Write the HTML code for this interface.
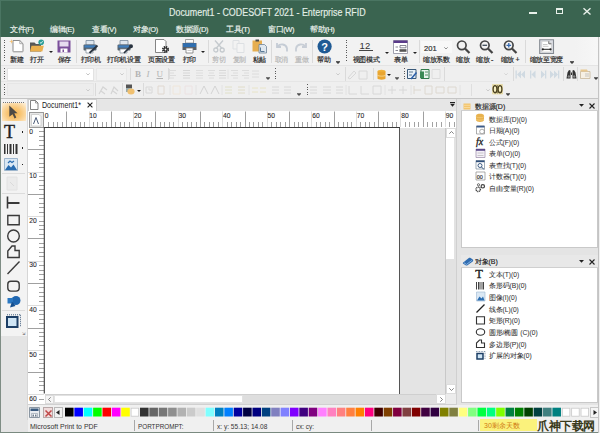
<!DOCTYPE html>
<html><head><meta charset="utf-8">
<style>
*{box-sizing:border-box;margin:0;padding:0}
html,body{width:600px;height:433px;overflow:hidden;background:#f0f0f0;font-family:"Liberation Sans",sans-serif;color:#222}
.a{position:absolute}
svg{position:absolute;overflow:visible}
#green{left:0;top:0;width:600px;height:36.5px;background:#3a6450;border-top:1px solid #4a7562;border-left:1px solid #4a7562}
#title{left:169px;top:6.5px;font-size:10px;color:#e4efe7;white-space:nowrap;transform-origin:0 0;transform:scaleX(0.89);-webkit-text-stroke:0.15px #e4efe7}
.menu{position:absolute;top:25px;font-size:7.5px;color:#eef4ef;white-space:nowrap;-webkit-text-stroke:0.15px #eef4ef;letter-spacing:-0.4px}
.lbl{position:absolute;top:55px;font-size:7px;color:#2a2a2a;white-space:nowrap;line-height:9px;-webkit-text-stroke:0.2px #2a2a2a;letter-spacing:-0.3px}
.dis{color:#b9b9b9;-webkit-text-stroke:0.2px #b9b9b9}
.sep{position:absolute;width:1px;background:#dadada}
.grip{position:absolute;width:1px;background:repeating-linear-gradient(180deg,#5a5a5a 0,#5a5a5a 1px,transparent 1px,transparent 2.5px)}
.dd{position:absolute;width:0;height:0;border-left:2px solid transparent;border-right:2px solid transparent;border-top:2px solid #222}
</style></head><body>
<div id="green" class="a"></div>
<div id="title" class="a">Document1 - CODESOFT 2021 - Enterprise RFID</div>
<!-- window controls -->
<div class="a" style="left:529px;top:11.5px;width:8px;height:2px;background:#e8f0ea"></div>
<div class="a" style="left:555.7px;top:7.5px;width:7.5px;height:6.7px;border:1.2px solid #e8f0ea;border-top-width:2px"></div>
<svg style="left:582.5px;top:8px" width="8" height="7"><path d="M0.5 0.3L7.5 6.5M7.5 0.3L0.5 6.5" stroke="#e8f0ea" stroke-width="1.4"/></svg>

<div class="a menu" style="left:10px">文件(F)</div>
<div class="a menu" style="left:50px">编辑(E)</div>
<div class="a menu" style="left:92px">查看(V)</div>
<div class="a menu" style="left:133px">对象(O)</div>
<div class="a menu" style="left:176px">数据源(D)</div>
<div class="a menu" style="left:226px">工具(T)</div>
<div class="a menu" style="left:268px">窗口(W)</div>
<div class="a menu" style="left:310px">帮助(H)</div>

<!-- toolbar 1 -->
<div class="a" style="left:0;top:36.5px;width:600px;height:29px;background:#f2f2f2"></div>
<div class="a" style="left:575px;top:36.5px;width:25px;height:29px;background:linear-gradient(90deg,#f2f2f2,#f7f7f7)"></div>
<div class="grip" style="left:4px;top:40px;height:22px"></div>

<!-- 新建 -->
<svg style="left:9px;top:39px" width="16" height="14">
 <path d="M4 1.5H10.8L14 4.7V12.3Q14 12.8 13.5 12.8H4.5Q4 12.8 4 12.3Z" fill="#fff" stroke="#8c8c8c" stroke-width="1"/>
 <path d="M10.8 1.5V4.7H14" fill="none" stroke="#9a9a9a" stroke-width="0.8"/>
 <path d="M2.5 0L3.1 1.9L5 2.5L3.1 3.1L2.5 5L1.9 3.1L0 2.5L1.9 1.9Z" fill="#f3c27a"/>
</svg>
<div class="lbl" style="left:10px">新建</div>
<!-- 打开 -->
<svg style="left:29px;top:39px" width="16" height="14">
 <path d="M1 3.5H5.5L7 5H12V12.5H1Z" fill="#575757"/>
 <path d="M1 12.5L2.5 6.8H14.8L13.3 12.5Z" fill="#eab04e"/>
 <circle cx="12.2" cy="3.2" r="2.8" fill="#2a9d96"/>
 <path d="M11 3.4L12.1 4.4L13.6 2.2" stroke="#fff" stroke-width="0.8" fill="none"/>
</svg>
<div class="lbl" style="left:30px">打开</div>
<div class="dd" style="left:48.5px;top:51px"></div>
<!-- 保存 -->
<svg style="left:57px;top:39.5px" width="14" height="13">
 <path d="M0.5 0.5H13.5V12.5H0.5Z" fill="#7a4f9a"/>
 <path d="M2.5 1.5H11.5V6.5H2.5Z" fill="#e6dcef"/>
 <path d="M3.5 8.5H10.5V12.5H3.5Z" fill="#fff"/>
 <path d="M5.5 9.5H7V12H5.5Z" fill="#7a4f9a"/>
</svg>
<div class="lbl" style="left:57.5px">保存</div>
<div class="sep" style="left:76px;top:40px;height:23px"></div>
<!-- 打印机 -->
<svg style="left:82.5px;top:39.5px" width="16" height="14">
 <path d="M3 0.5H11V5H3Z" fill="#dfe7ef" stroke="#76899b" stroke-width="0.8"/>
 <rect x="0.5" y="4.5" width="13" height="6" rx="1" fill="#56636f"/>
 <path d="M1.5 5.3H12.5V7.6H1.5Z" fill="#3f7fbf"/>
 <path d="M3 9H10V13H3Z" fill="#fff" stroke="#7d8a96" stroke-width="0.7"/>
 <path d="M6.5 13L14.5 5.5" stroke="#2a3440" stroke-width="1.8"/>
</svg>
<div class="lbl" style="left:80.5px">打印机</div>
<!-- 打印机设置 -->
<svg style="left:117px;top:39.5px" width="16" height="14">
 <path d="M3 0.5H11V5H3Z" fill="#dfe7ef" stroke="#76899b" stroke-width="0.8"/>
 <rect x="0.5" y="4.5" width="13" height="6" rx="1" fill="#56636f"/>
 <path d="M1.5 5.3H12.5V7.6H1.5Z" fill="#3f7fbf"/>
 <path d="M3 9H10V13H3Z" fill="#fff" stroke="#7d8a96" stroke-width="0.7"/>
 <path d="M7 13L11.5 8.5" stroke="#2a3440" stroke-width="1.7"/>
 <path d="M10.5 9.5L12 6.2A2 2 0 1 1 14 8.3Z" fill="#2a3440"/>
</svg>
<div class="lbl" style="left:107px">打印机设置</div>
<!-- 页面设置 -->
<svg style="left:155px;top:39px" width="16" height="14">
 <path d="M0.5 0.5H9L11 2.5V13.5H0.5Z" fill="#fff" stroke="#777" stroke-width="0.9"/>
 <circle cx="10.5" cy="10.5" r="2.6" fill="none" stroke="#2a2a2a" stroke-width="1.9" stroke-dasharray="1.3 0.75"/>
 <circle cx="10.5" cy="10.5" r="2" fill="#2a2a2a"/>
 <circle cx="10.5" cy="10.5" r="0.9" fill="#fff"/>
</svg>
<div class="lbl" style="left:148px">页面设置</div>
<!-- 打印 -->
<svg style="left:182px;top:39px" width="16" height="15">
 <path d="M3.5 0.5H11.5V4H3.5Z" fill="#fafafa" stroke="#8a8a8a" stroke-width="0.8"/>
 <path d="M0.5 4H14.5V11H0.5Z" fill="#5a5f66"/>
 <path d="M1 4.2H14V8H1Z" fill="#2f6eb0"/>
 <path d="M4 9H11V14H4Z" fill="#fff" stroke="#777" stroke-width="0.8"/>
 <path d="M5.5 11.5H9.5" stroke="#aaa" stroke-width="0.6"/>
</svg>
<div class="lbl" style="left:182.5px">打印</div>
<div class="dd" style="left:200.5px;top:51px"></div>
<div class="sep" style="left:207.5px;top:40px;height:23px"></div>
<!-- 剪切 -->
<svg style="left:213px;top:40px" width="13" height="13">
 <path d="M2 0.5L9 8.5M10 0.5L3 8.5" stroke="#c5cace" stroke-width="1.4"/>
 <circle cx="2.8" cy="10" r="2" fill="none" stroke="#c5cace" stroke-width="1.3"/>
 <circle cx="9.2" cy="10" r="2" fill="none" stroke="#c5cace" stroke-width="1.3"/>
</svg>
<div class="lbl dis" style="left:212px">剪切</div>
<!-- 复制 -->
<svg style="left:232px;top:40px" width="14" height="13">
 <path d="M1 0.5H7V9H1Z" fill="none" stroke="#dde0e3" stroke-width="1"/>
 <path d="M5 3.5H12V12.5H5Z" fill="#f4f4f4" stroke="#dde0e3" stroke-width="1"/>
</svg>
<div class="lbl dis" style="left:232.5px">复制</div>
<!-- 粘贴 -->
<svg style="left:252px;top:39px" width="15" height="15">
 <path d="M0.5 1.5H10V12.5H0.5Z" fill="#e6ae50"/>
 <path d="M3.5 0.5H7V2.5H3.5Z" fill="#4a4a4a"/>
 <path d="M7 5.5H12.5L14.5 7.5V14H7Z" fill="#dfe7ef" stroke="#6d8398" stroke-width="0.8"/>
 <path d="M8.5 8.5V12.5H12.5" fill="none" stroke="#5a7a96" stroke-width="1"/>
</svg>
<div class="lbl" style="left:252.5px">粘贴</div>
<div class="sep" style="left:270.5px;top:40px;height:23px"></div>
<!-- 取消 -->
<svg style="left:274px;top:42px" width="15" height="11">
 <path d="M3 1V5H7" fill="none" stroke="#c5ccd5" stroke-width="1.8"/>
 <path d="M3.5 4.5C6 1.5 12 1.5 13 6.5L13 9.5" fill="none" stroke="#c5ccd5" stroke-width="1.8"/>
</svg>
<div class="lbl dis" style="left:274.5px">取消</div>
<!-- 重做 -->
<svg style="left:294px;top:42px" width="15" height="11">
 <path d="M12 1V5H8" fill="none" stroke="#c8ced6" stroke-width="1.8"/>
 <path d="M11.5 4.5C9 1.5 3 1.5 2 6.5L2 9.5" fill="none" stroke="#c8ced6" stroke-width="1.8"/>
</svg>
<div class="lbl dis" style="left:295px">重做</div>
<div class="sep" style="left:312px;top:40px;height:23px"></div>
<!-- 帮助 -->
<svg style="left:317px;top:38.5px" width="16" height="16">
 <circle cx="7.6" cy="7.5" r="7.1" fill="#1f5a94"/>
 <text x="7.6" y="11.6" font-family="Liberation Sans" font-weight="bold" font-size="11" fill="#fff" text-anchor="middle">?</text>
</svg>
<div class="lbl" style="left:317px">帮助</div>
<svg style="left:336px;top:61px" width="4" height="3"><path d="M0 0.5H4M0.5 1L2 2.6L3.5 1" stroke="#333" stroke-width="0.8" fill="#333"/></svg>
<div class="grip" style="left:346px;top:40px;height:22px"></div>
<!-- 视图模式 -->
<div class="a" style="left:359.5px;top:41px;font-size:9.5px;color:#333;line-height:9px;letter-spacing:0.3px">12</div>
<div class="a" style="left:359px;top:50px;width:14px;height:1px;background:#444"></div>
<div class="lbl" style="left:352.5px">视图模式</div>
<div class="dd" style="left:384.5px;top:52px"></div>
<!-- 表单 -->
<svg style="left:393px;top:39.5px" width="15" height="14">
 <path d="M0.5 0.5H14.5V13.5H0.5Z" fill="#fff" stroke="#8a8a9a" stroke-width="0.8"/>
 <path d="M0.5 0.5H14.5V3H0.5Z" fill="#5a3a8a"/>
 <path d="M2.5 7H5M7 5.5H13V7.8H7Z" stroke="#6a6a7a" stroke-width="0.8" fill="none"/>
 <path d="M2.5 10.5H5" stroke="#6a6a7a" stroke-width="0.8"/>
 <path d="M6.5 9.2H13.5V11.8H6.5Z" fill="#555"/>
</svg>
<div class="lbl" style="left:394px">表单</div>
<div class="dd" style="left:412.5px;top:52px"></div>
<div class="sep" style="left:419px;top:40px;height:23px"></div>
<!-- 201 -->
<div class="a" style="left:420.5px;top:41px;width:31px;height:12px;background:#f8f8f8"></div><div class="a" style="left:424px;top:45px;font-size:7.6px;color:#333;line-height:8px;-webkit-text-stroke:0.2px #333">201</div>
<svg style="left:444.3px;top:46.7px" width="4" height="3"><path d="M0.3 0.3L2 2L3.7 0.3" stroke="#777" stroke-width="0.8" fill="none"/></svg>
<div class="lbl" style="left:423px">缩放系数</div>
<!-- zoom -->
<svg style="left:456px;top:40px" width="15" height="15">
 <circle cx="5.8" cy="5.3" r="4.3" fill="none" stroke="#444" stroke-width="1.7"/>
 <path d="M9 8.5L13.5 13" stroke="#444" stroke-width="2.2"/>
</svg>
<div class="lbl" style="left:456px">缩放</div>
<svg style="left:479px;top:40px" width="15" height="15">
 <circle cx="5.8" cy="5.3" r="4.3" fill="none" stroke="#444" stroke-width="1.7"/>
 <path d="M9 8.5L13.5 13" stroke="#444" stroke-width="2.2"/>
 <path d="M3.5 5.3H8.1" stroke="#3e4a58" stroke-width="1.3"/>
</svg>
<div class="lbl" style="left:476px">缩放 -</div>
<svg style="left:503px;top:40px" width="15" height="15">
 <circle cx="5.8" cy="5.3" r="4.3" fill="none" stroke="#444" stroke-width="1.7"/>
 <path d="M9 8.5L13.5 13" stroke="#444" stroke-width="2.2"/>
 <path d="M3.5 5.3H8.1M5.8 3V7.6" stroke="#3469b0" stroke-width="1.3"/>
</svg>
<div class="lbl" style="left:500.5px">缩放 +</div>
<div class="sep" style="left:524.5px;top:40px;height:23px"></div>
<!-- zoom width -->
<svg style="left:539px;top:38.5px" width="16" height="16">
 <path d="M0.7 0.7H14.5V14.5H0.7Z" fill="#dcdee4" stroke="#858a92" stroke-width="1.1"/>
 <path d="M2.8 2.3H9.8L12.3 4.8V13H2.8Z" fill="#fff" stroke="#b8b8b8" stroke-width="0.5"/>
 <path d="M9.8 2.3V4.8H12.3" fill="none" stroke="#444" stroke-width="0.8"/>
 <path d="M4 5.5H8.5M4 7.3H9.5" stroke="#b0b0b0" stroke-width="0.7"/>
 <path d="M4 10.3H11.3" stroke="#222" stroke-width="1"/>
 <circle cx="3.8" cy="10.3" r="1.1" fill="#222"/><circle cx="11.5" cy="10.3" r="1.1" fill="#222"/>
</svg>
<div class="lbl" style="left:529.5px">缩放至宽度</div>
<svg style="left:570px;top:61px" width="4" height="3"><path d="M0 0.5H4M0.5 1L2 2.6L3.5 1" stroke="#333" stroke-width="0.8" fill="#333"/></svg>

<!-- toolbar 2/3 -->
<div class="a" style="left:0;top:65.5px;width:600px;height:32.5px;background:#efefef"></div>
<div class="a" style="left:0;top:65px;width:600px;height:1px;background:#e4e4e4"></div>
<div class="a" style="left:0;top:81px;width:510px;height:1px;background:#e6e6e6"></div>
<!-- row 2 -->
<div class="grip" style="left:4px;top:68px;height:12px"></div>
<div class="a" style="left:7px;top:67.5px;width:87px;height:13px;background:#fff;border:1px solid #e2e2e2"></div>
<svg style="left:85.5px;top:72.5px" width="4" height="3"><path d="M0.3 0.3L2 2L3.7 0.3" stroke="#aaa" stroke-width="0.7" fill="none"/></svg>
<div class="a" style="left:96px;top:67.5px;width:31px;height:13px;background:#f2f2f2;border:1px solid #e8e8e8"></div>
<svg style="left:120px;top:72.5px" width="4" height="3"><path d="M0.3 0.3L2 2L3.7 0.3" stroke="#bbb" stroke-width="0.7" fill="none"/></svg>
<div class="sep" style="left:130px;top:68px;height:12px"></div>
<div class="a" style="left:135px;top:68.5px;font:bold 9px 'Liberation Serif',serif;color:#b4b4b4">B</div>
<div class="a" style="left:146.5px;top:68.5px;font:italic 9px 'Liberation Serif',serif;color:#b4b4b4">I</div>
<div class="a" style="left:156.5px;top:68.5px;font:9px 'Liberation Serif',serif;color:#b4b4b4;text-decoration:underline">U</div>
<div class="sep" style="left:168px;top:68px;height:12px"></div>
<svg style="left:169px;top:69px" width="95" height="11" fill="none" stroke="#dcdcdc" stroke-width="1">
 <path d="M1 1.5H7M1 4H5M1 6.5H7M1 9H5M0.5 0V10"/>
 <path d="M14 1.5H21M14 4H21M14 6.5H21M14 9H21" stroke="#d6d6d6"/>
 <path d="M27 1.5H34M27 4H34M27 6.5H34M27 9H34" stroke="#dedede"/>
 <path d="M39 1.5H46M40 4H45M39 6.5H46M40 9H45" stroke="#dcdcdc"/>
 <path d="M50 1.5H57M50 4H57M50 6.5H57M50 9H57" stroke="#d8d8d8"/>
 <path d="M59 0.5V10" stroke="#e2e2e2"/>
 <path d="M62 1.5H69M64 4H69M62 6.5H69M64 9H69"/>
 <path d="M73 1.5H80M75 4H80M73 6.5H80M75 9H80"/>
 <path d="M83 2H90M83 5H90M83 8H90"/>
</svg>
<svg style="left:265.5px;top:77px" width="4" height="3"><path d="M0 0.5H4M0.5 1L2 2.6L3.5 1" stroke="#444" stroke-width="0.7" fill="#444"/></svg>
<div class="grip" style="left:275px;top:68px;height:11px"></div>
<svg style="left:336px;top:73px" width="4" height="3"><path d="M0.3 0.3L2 2L3.7 0.3" stroke="#bbb" stroke-width="0.7" fill="none"/></svg>
<div class="sep" style="left:344.5px;top:67px;height:14px"></div>
<svg style="left:347px;top:69px" width="25" height="11" fill="none" stroke="#d8d8d8" stroke-width="1">
 <path d="M1 9L7 2L9 4L3 10Z M12 2H20V10H12Z"/>
</svg>
<div class="sep" style="left:373px;top:68px;height:12px"></div>
<svg style="left:377px;top:68.5px" width="10" height="12">
 <ellipse cx="4.5" cy="2.5" rx="4" ry="1.8" fill="#f0b43c"/>
 <path d="M0.5 2.5V9.5C0.5 11 8.5 11 8.5 9.5V2.5" fill="#e9a530"/>
 <path d="M0.5 6C0.5 7.5 8.5 7.5 8.5 6" stroke="#fff3c8" stroke-width="0.6" fill="none"/>
</svg>
<div class="dd" style="left:387px;top:73.5px"></div>
<svg style="left:395px;top:77px" width="4" height="3"><path d="M0 0.5H4M0.5 1L2 2.6L3.5 1" stroke="#444" stroke-width="0.7" fill="#444"/></svg>
<div class="grip" style="left:403.5px;top:68px;height:11px"></div>
<svg style="left:407px;top:68.5px" width="36" height="11">
 <path d="M0.5 0.5H9V9.5H0.5Z" fill="#e8f0f8" stroke="#3a5a7a" stroke-width="1"/>
 <path d="M2 3H6M2 6H5" stroke="#3a5a7a" stroke-width="0.8"/>
 <path d="M4 10L9.5 3.5" stroke="#2a5da8" stroke-width="1.5"/>
 <path d="M14 0.5H22V9.5H14Z" fill="#e8f4ec" stroke="#2f7a4a" stroke-width="1"/>
 <path d="M13 2.5H17V9H13Z" fill="#3a8a55"/>
 <path d="M18 3H21M18 6H21" stroke="#2f7a4a" stroke-width="0.8"/>
 <path d="M25 0.5H33V9.5H25Z" fill="none" stroke="#dcdcdc" stroke-width="1"/>
</svg>
<div class="sep" style="left:443.5px;top:67px;height:14px"></div>
<svg style="left:503.5px;top:73px" width="4" height="3"><path d="M0.3 0.3L2 2L3.7 0.3" stroke="#ccc" stroke-width="0.7" fill="none"/></svg>
<div class="sep" style="left:512.5px;top:67px;height:14px"></div>
<svg style="left:515px;top:69.5px" width="46" height="9" fill="#d0dae2">
 <path d="M0.5 0.5H1.8V8.5H0.5Z M2 4.5L6 0.5V8.5Z M6 4.5L10 0.5V8.5Z"/>
 <path d="M15 0.5H16.3V8.5H15Z M16.5 4.5L20.5 0.5V8.5Z"/>
 <path d="M26 0.5L30 4.5L26 8.5Z M30 0.5H31.3V8.5H30Z"/>
 <path d="M35 0.5L39 4.5L35 8.5Z M39 0.5L43 4.5L39 8.5Z M43 0.5H44.3V8.5H43Z"/>
</svg>
<div class="sep" style="left:562.5px;top:67px;height:14px"></div>
<svg style="left:565.5px;top:69px" width="11" height="10" fill="#333">
 <path d="M0.5 9.5L1.5 3.5L3 1L4.5 1.5V9.5Z M5 3.5H6V6H5Z M6.5 1.5L8 1L9.5 3.5L10.5 9.5H6.5Z"/>
 <circle cx="2.8" cy="7.5" r="1.2" fill="#888"/><circle cx="8.2" cy="7.5" r="1.2" fill="#888"/>
</svg>
<div class="sep" style="left:577px;top:67px;height:14px"></div>
<svg style="left:580px;top:69px" width="11" height="10">
 <path d="M0.5 2.5H10V9.5H0.5Z" fill="#f6f0e4" stroke="#c8b89a" stroke-width="0.8"/>
 <path d="M0.5 0.5H7L8 2.5H0.5Z" fill="#e8c890"/>
 <path d="M5 5H9M5 7H9" stroke="#aaa" stroke-width="0.6"/>
</svg>
<svg style="left:593.5px;top:77px" width="4" height="3"><path d="M0 0.5H4M0.5 1L2 2.6L3.5 1" stroke="#333" stroke-width="0.7" fill="#333"/></svg>
<!-- row 3 -->
<div class="grip" style="left:4px;top:84px;height:12px"></div>
<div class="a" style="left:7px;top:82.5px;width:87px;height:13.5px;background:#ededed;border:1px solid #e6e6e6"></div>
<svg style="left:85.5px;top:88.5px" width="4" height="3"><path d="M0.3 0.3L2 2L3.7 0.3" stroke="#bbb" stroke-width="0.7" fill="none"/></svg>
<div class="sep" style="left:95px;top:83px;height:13px"></div>
<svg style="left:98px;top:84.5px" width="22" height="10" fill="none" stroke="#d4d4d4" stroke-width="1.2">
 <path d="M1 9L5 2L9 5M3 6L7 9"/><path d="M13 9L16 2L20 6M15 6L19 9"/>
</svg>
<div class="sep" style="left:121.5px;top:83px;height:13px"></div>
<svg style="left:125px;top:84px" width="10" height="11">
 <path d="M1 0.5H7V4H1Z" fill="#555"/>
 <path d="M1 4H7V8H1Z" fill="#9aa"/>
 <ellipse cx="6" cy="7.5" rx="3.6" ry="3" fill="#f0c070"/>
</svg>
<div class="dd" style="left:136.5px;top:89.5px"></div>
<div class="sep" style="left:142.5px;top:83px;height:13px"></div>
<svg style="left:145px;top:84.5px" width="150" height="10" fill="none" stroke="#d8d8d8" stroke-width="1">
 <path d="M1 2H7V8H1Z M3 4H5V6"/><path d="M13 1H19V9H13Z" stroke="#e0d8d0"/>
 <path d="M25 0V10" stroke="#e2e2e2"/>
 <path d="M28 1H35V9H28Z" stroke="#efe6da"/><path d="M40 1H47V9H40Z" stroke="#ece2e2"/>
 <path d="M51 0V10" stroke="#e2e2e2"/>
 <path d="M55 9L59 1L63 9M66 9L70 1L74 9" stroke="#d4d4d4"/>
 <path d="M77 0V10" stroke="#e2e2e2"/>
 <path d="M80 2H87M80 5H87M80 8H87" stroke="#e0e0c8"/><path d="M93 2H100M93 5H100M93 8H100" stroke="#e0dcc8"/>
 <path d="M104 0V10" stroke="#e2e2e2"/>
 <path d="M107 3H113M115 3H121M107 7H113M115 7H121" stroke="#e8e4c8"/>
 <path d="M127 2H134M127 5H134M127 8H134"/>
 <path d="M139 2H146M139 5H146M139 8H146"/>
</svg>
<svg style="left:297px;top:93px" width="4" height="3"><path d="M0 0.5H4M0.5 1L2 2.6L3.5 1" stroke="#444" stroke-width="0.7" fill="#444"/></svg>
<div class="grip" style="left:306.5px;top:84px;height:11px"></div>
<svg style="left:309px;top:84.5px" width="200" height="10" fill="none" stroke="#d8d8d8" stroke-width="1">
 <path d="M1 2H8M1 5H8M1 8H8"/><path d="M14 2H22M14 5H22M14 8H22"/><path d="M27 2H34M27 5H34M27 8H34"/>
 <path d="M37 0V10" stroke="#e2e2e2"/>
 <path d="M40 1V9H48M52 1V9H60" /><path d="M64 1H72V9H64Z"/>
 <path d="M76 0V10" stroke="#e2e2e2"/>
 <path d="M79 5H87M83 1V9M90 5H98M94 1V9"/>
 <path d="M102 0V10" stroke="#e2e2e2"/>
 <path d="M105 1V9M105 5H112M116 1H123V9H116Z M127 2H135V8H127Z M139 2H147V8H139Z" stroke="#ddd8d0"/>
 <path d="M151 0V10" stroke="#e2e2e2"/>
 <path d="M162.5 -1V11" stroke="#dedede"/>
</svg>
<svg style="left:486px;top:89px" width="4" height="3"><path d="M0.3 0.3L2 2L3.7 0.3" stroke="#bbb" stroke-width="0.7" fill="none"/></svg>
<svg style="left:492px;top:84px" width="12" height="11">
 <path d="M0.5 0.5H10.5V10H0.5Z" fill="#f7efc0" stroke="#e0d090" stroke-width="0.6"/>
 <ellipse cx="3" cy="5.2" rx="1.9" ry="3.6" fill="none" stroke="#4a4020" stroke-width="1.3"/>
 <path d="M5.5 1V9.5" stroke="#6a6030" stroke-width="0.7"/>
 <ellipse cx="8" cy="5.2" rx="1.9" ry="3.6" fill="none" stroke="#4a4020" stroke-width="1.3"/>
</svg>
<svg style="left:506px;top:92.5px" width="4" height="3"><path d="M0 0.5H4M0.5 1L2 2.6L3.5 1" stroke="#333" stroke-width="0.7" fill="#333"/></svg>

<!-- doc area -->
<div class="a" style="left:0;top:97.5px;width:600px;height:1px;background:#c4c4c4"></div>
<div class="a" style="left:0;top:98.5px;width:600px;height:335px;background:#e4e4e4"></div>
<!-- left toolbox -->
<div class="a" style="left:0;top:98.5px;width:27px;height:237px;background:#f3f3f3"></div>
<div class="a" style="left:27px;top:98.5px;width:1px;height:321px;background:#d6d6d6"></div>
<div class="a" style="left:0;top:36.5px;width:1px;height:397px;background:#7f8d85"></div>
<div class="a" style="left:3px;top:101.5px;width:21px;height:1px;border-top:1px dotted #777"></div>
<div class="a" style="left:2px;top:103px;width:24px;height:17.5px;background:radial-gradient(ellipse 65% 70% at 50% 58%,#f6b24a 0%,#f8c677 45%,#fbdcaa 80%,#fdebcf 100%)"></div>
<svg style="left:9px;top:105px" width="10" height="14"><path d="M0.3 0.5L8.5 8.2H5.3L7.3 12.6L5.6 13.5L3.6 9.2L0.3 11.8Z" fill="#4e4a44"/></svg>
<div class="a" style="left:4px;top:123px;font:18px 'Liberation Serif',serif;color:#222;line-height:18px;-webkit-text-stroke:0.4px #222">T</div>
<div class="a" style="left:21.5px;top:131px;width:1.5px;height:1.5px;background:#222"></div>
<svg style="left:4px;top:143.5px" width="15" height="10" fill="#333"><path d="M0 0H1.5V10H0Z M3 0H4V10H3Z M5.5 0H7.5V10H5.5Z M9 0H10V10H9Z M11.5 0H13.5V10H11.5Z"/></svg>
<div class="a" style="left:21.5px;top:147px;width:1.5px;height:1.5px;background:#222"></div>
<svg style="left:3.5px;top:157.5px" width="15" height="13">
 <path d="M0.5 0.5H13.5V12.5H0.5Z" fill="#dbe8f4" stroke="#8aa6c2" stroke-width="0.8"/>
 <path d="M1 12L4.5 7L7 9.5L9.5 6.5L13 12Z" fill="#2a6cb0"/>
 <path d="M4 5L6 3L8 4.5L10 3" stroke="#2a6cb0" stroke-width="1.2" fill="none"/>
</svg>
<div class="a" style="left:21.5px;top:163.5px;width:1.5px;height:1.5px;background:#222"></div>
<div class="a" style="left:2px;top:173px;width:23px;height:1px;background:#dcdcdc"></div>
<svg style="left:6px;top:176px" width="12" height="15"><path d="M1 1H11V14H1Z" fill="#ebebeb" stroke="#e2e2e2" stroke-width="1"/><path d="M4 6L8 10" stroke="#dadada"/></svg>
<div class="a" style="left:2px;top:192.5px;width:23px;height:1px;background:#dcdcdc"></div>
<svg style="left:6px;top:196px" width="15" height="135" fill="none" stroke="#3a3a3a" stroke-width="1.4">
 <path d="M1.5 0.5V12.5" stroke-width="1.6"/><path d="M1.5 7H13.5" stroke-width="2"/>
 <path d="M1.8 19.5H13.2V28.7H1.8Z"/>
 <ellipse cx="7.5" cy="40" rx="5.8" ry="6"/>
 <path d="M1.8 61.5V55L6 50H9V54.5H13.2V61.5Z"/>
 <path d="M1.5 78L13.5 65.5"/>
 <rect x="1.8" y="85.3" width="11.4" height="9.8" rx="3"/>
</svg>
<svg style="left:6.5px;top:295px" width="14" height="13">
 <circle cx="9" cy="5.5" r="4.5" fill="#1f66b0"/>
 <path d="M0.5 3H6V8.5H0.5Z" fill="#2a78c2"/>
 <path d="M3 12.5L5 6.5L8.5 11Z" fill="#164f8e"/>
</svg>
<div class="a" style="left:2px;top:310px;width:23px;height:1px;background:#dcdcdc"></div>
<svg style="left:6px;top:313.5px" width="16" height="14">
 <path d="M1 3H11.5V13H1Z" fill="#cfe5f5" stroke="#1d3f66" stroke-width="2"/>
 <path d="M1 0.8H14.5M14.5 0.8V13" stroke="#1d3f66" stroke-width="0.8" stroke-dasharray="1 1"/>
</svg>
<div class="a" style="left:22px;top:330.5px;font-size:4px;color:#555">&#8690;</div>

<!-- tab row -->
<div class="a" style="left:28px;top:98.5px;width:428px;height:12.5px;background:#e6e6e6"></div>
<div class="a" style="left:27.5px;top:98.5px;width:69.5px;height:13.5px;background:#fff;border:1px solid #cfcfcf;border-bottom:none"></div>
<svg style="left:30px;top:100px" width="9" height="10"><path d="M0.5 0.5H5.5L8 3V9.5H0.5Z" fill="#fff" stroke="#666" stroke-width="0.8"/><path d="M5.5 0.5V3H8" fill="none" stroke="#666" stroke-width="0.6"/></svg>
<div class="a" style="left:41.7px;top:100.5px;font-size:8.3px;color:#222;line-height:9px;transform-origin:0 0;transform:scaleX(0.855)">Document1*</div>
<svg style="left:86.5px;top:101.8px" width="6" height="6"><path d="M0.6 0.6L5.4 5.4M5.4 0.6L0.6 5.4" stroke="#222" stroke-width="1.1"/></svg>
<svg style="left:449.7px;top:102.3px" width="5" height="5" fill="#222"><path d="M0 0H5V1H0Z M0 1.8H5L2.5 4.8Z"/></svg>

<!-- rulers -->
<div class="a" style="left:28px;top:111px;width:428px;height:17px;background:#fff"></div>
<div class="a" style="left:28px;top:128px;width:16.5px;height:276px;background:#fff"></div>
<div class="a" style="left:29px;top:112px;width:15px;height:15.5px;background:#e8e8e8;border:1px solid #9a9a9a"></div>
<svg style="left:31px;top:113.5px" width="11" height="13"><path d="M0.5 0.5H8L10 2.5V12H0.5Z" fill="#fff" stroke="#bbb" stroke-width="0.6"/><path d="M2.5 10L5 3.5L7.5 10" fill="none" stroke="#4a5a78" stroke-width="1"/></svg>
<svg style="left:0;top:0;width:600px;height:433px" width="600" height="433" font-family="Liberation Sans">
<path d="M48.50 122V127" stroke="#a2a2a2" stroke-width="1"/>
<path d="M53.50 122V127" stroke="#a2a2a2" stroke-width="1"/>
<path d="M57.50 122V127" stroke="#a2a2a2" stroke-width="1"/>
<path d="M62.50 122V127" stroke="#a2a2a2" stroke-width="1"/>
<path d="M66.50 111.5V127" stroke="#a0a0a0" stroke-width="1"/>
<path d="M71.50 122V127" stroke="#a2a2a2" stroke-width="1"/>
<path d="M75.50 122V127" stroke="#a2a2a2" stroke-width="1"/>
<path d="M80.50 122V127" stroke="#a2a2a2" stroke-width="1"/>
<path d="M84.50 122V127" stroke="#a2a2a2" stroke-width="1"/>
<path d="M89.50 111.5V127" stroke="#d4d4d4" stroke-width="0.8"/>
<path d="M93.50 122V127" stroke="#a2a2a2" stroke-width="1"/>
<path d="M97.50 122V127" stroke="#a2a2a2" stroke-width="1"/>
<path d="M102.50 122V127" stroke="#a2a2a2" stroke-width="1"/>
<path d="M106.50 122V127" stroke="#a2a2a2" stroke-width="1"/>
<path d="M111.50 111.5V127" stroke="#a0a0a0" stroke-width="1"/>
<path d="M115.50 122V127" stroke="#a2a2a2" stroke-width="1"/>
<path d="M120.50 122V127" stroke="#a2a2a2" stroke-width="1"/>
<path d="M124.50 122V127" stroke="#a2a2a2" stroke-width="1"/>
<path d="M129.50 122V127" stroke="#a2a2a2" stroke-width="1"/>
<path d="M133.50 111.5V127" stroke="#d4d4d4" stroke-width="0.8"/>
<path d="M138.50 122V127" stroke="#a2a2a2" stroke-width="1"/>
<path d="M142.50 122V127" stroke="#a2a2a2" stroke-width="1"/>
<path d="M146.50 122V127" stroke="#a2a2a2" stroke-width="1"/>
<path d="M151.50 122V127" stroke="#a2a2a2" stroke-width="1"/>
<path d="M155.50 111.5V127" stroke="#a0a0a0" stroke-width="1"/>
<path d="M160.50 122V127" stroke="#a2a2a2" stroke-width="1"/>
<path d="M164.50 122V127" stroke="#a2a2a2" stroke-width="1"/>
<path d="M169.50 122V127" stroke="#a2a2a2" stroke-width="1"/>
<path d="M173.50 122V127" stroke="#a2a2a2" stroke-width="1"/>
<path d="M178.50 111.5V127" stroke="#d4d4d4" stroke-width="0.8"/>
<path d="M182.50 122V127" stroke="#a2a2a2" stroke-width="1"/>
<path d="M187.50 122V127" stroke="#a2a2a2" stroke-width="1"/>
<path d="M191.50 122V127" stroke="#a2a2a2" stroke-width="1"/>
<path d="M196.50 122V127" stroke="#a2a2a2" stroke-width="1"/>
<path d="M200.50 111.5V127" stroke="#a0a0a0" stroke-width="1"/>
<path d="M204.50 122V127" stroke="#a2a2a2" stroke-width="1"/>
<path d="M209.50 122V127" stroke="#a2a2a2" stroke-width="1"/>
<path d="M213.50 122V127" stroke="#a2a2a2" stroke-width="1"/>
<path d="M218.50 122V127" stroke="#a2a2a2" stroke-width="1"/>
<path d="M222.50 111.5V127" stroke="#d4d4d4" stroke-width="0.8"/>
<path d="M227.50 122V127" stroke="#a2a2a2" stroke-width="1"/>
<path d="M231.50 122V127" stroke="#a2a2a2" stroke-width="1"/>
<path d="M236.50 122V127" stroke="#a2a2a2" stroke-width="1"/>
<path d="M240.50 122V127" stroke="#a2a2a2" stroke-width="1"/>
<path d="M245.50 111.5V127" stroke="#a0a0a0" stroke-width="1"/>
<path d="M249.50 122V127" stroke="#a2a2a2" stroke-width="1"/>
<path d="M253.50 122V127" stroke="#a2a2a2" stroke-width="1"/>
<path d="M258.50 122V127" stroke="#a2a2a2" stroke-width="1"/>
<path d="M262.50 122V127" stroke="#a2a2a2" stroke-width="1"/>
<path d="M267.50 111.5V127" stroke="#d4d4d4" stroke-width="0.8"/>
<path d="M271.50 122V127" stroke="#a2a2a2" stroke-width="1"/>
<path d="M276.50 122V127" stroke="#a2a2a2" stroke-width="1"/>
<path d="M280.50 122V127" stroke="#a2a2a2" stroke-width="1"/>
<path d="M285.50 122V127" stroke="#a2a2a2" stroke-width="1"/>
<path d="M289.50 111.5V127" stroke="#a0a0a0" stroke-width="1"/>
<path d="M294.50 122V127" stroke="#a2a2a2" stroke-width="1"/>
<path d="M298.50 122V127" stroke="#a2a2a2" stroke-width="1"/>
<path d="M302.50 122V127" stroke="#a2a2a2" stroke-width="1"/>
<path d="M307.50 122V127" stroke="#a2a2a2" stroke-width="1"/>
<path d="M311.50 111.5V127" stroke="#d4d4d4" stroke-width="0.8"/>
<path d="M316.50 122V127" stroke="#a2a2a2" stroke-width="1"/>
<path d="M320.50 122V127" stroke="#a2a2a2" stroke-width="1"/>
<path d="M325.50 122V127" stroke="#a2a2a2" stroke-width="1"/>
<path d="M329.50 122V127" stroke="#a2a2a2" stroke-width="1"/>
<path d="M334.50 111.5V127" stroke="#a0a0a0" stroke-width="1"/>
<path d="M338.50 122V127" stroke="#a2a2a2" stroke-width="1"/>
<path d="M343.50 122V127" stroke="#a2a2a2" stroke-width="1"/>
<path d="M347.50 122V127" stroke="#a2a2a2" stroke-width="1"/>
<path d="M351.50 122V127" stroke="#a2a2a2" stroke-width="1"/>
<path d="M356.50 111.5V127" stroke="#d4d4d4" stroke-width="0.8"/>
<path d="M360.50 122V127" stroke="#a2a2a2" stroke-width="1"/>
<path d="M365.50 122V127" stroke="#a2a2a2" stroke-width="1"/>
<path d="M369.50 122V127" stroke="#a2a2a2" stroke-width="1"/>
<path d="M374.50 122V127" stroke="#a2a2a2" stroke-width="1"/>
<path d="M378.50 111.5V127" stroke="#a0a0a0" stroke-width="1"/>
<path d="M383.50 122V127" stroke="#a2a2a2" stroke-width="1"/>
<path d="M387.50 122V127" stroke="#a2a2a2" stroke-width="1"/>
<path d="M392.50 122V127" stroke="#a2a2a2" stroke-width="1"/>
<path d="M396.50 122V127" stroke="#a2a2a2" stroke-width="1"/>
<path d="M400.50 111.5V127" stroke="#d4d4d4" stroke-width="0.8"/>
<path d="M405.50 122V127" stroke="#a2a2a2" stroke-width="1"/>
<path d="M409.50 122V127" stroke="#a2a2a2" stroke-width="1"/>
<path d="M414.50 122V127" stroke="#a2a2a2" stroke-width="1"/>
<path d="M418.50 122V127" stroke="#a2a2a2" stroke-width="1"/>
<path d="M423.50 111.5V127" stroke="#a0a0a0" stroke-width="1"/>
<path d="M427.50 122V127" stroke="#a2a2a2" stroke-width="1"/>
<path d="M432.50 122V127" stroke="#a2a2a2" stroke-width="1"/>
<path d="M436.50 122V127" stroke="#a2a2a2" stroke-width="1"/>
<path d="M441.50 122V127" stroke="#a2a2a2" stroke-width="1"/>
<path d="M445.50 111.5V127" stroke="#d4d4d4" stroke-width="0.8"/>
<path d="M449.50 122V127" stroke="#a2a2a2" stroke-width="1"/>
<path d="M454.50 122V127" stroke="#a2a2a2" stroke-width="1"/>
<text x="44.80" y="118.4" font-size="6.7" fill="#2a2a2a" stroke="#2a2a2a" stroke-width="0.1">0</text>
<text x="89.36" y="118.4" font-size="6.7" fill="#2a2a2a" stroke="#2a2a2a" stroke-width="0.1">10</text>
<text x="133.92" y="118.4" font-size="6.7" fill="#2a2a2a" stroke="#2a2a2a" stroke-width="0.1">20</text>
<text x="178.48" y="118.4" font-size="6.7" fill="#2a2a2a" stroke="#2a2a2a" stroke-width="0.1">30</text>
<text x="223.04" y="118.4" font-size="6.7" fill="#2a2a2a" stroke="#2a2a2a" stroke-width="0.1">40</text>
<text x="267.60" y="118.4" font-size="6.7" fill="#2a2a2a" stroke="#2a2a2a" stroke-width="0.1">50</text>
<text x="312.16" y="118.4" font-size="6.7" fill="#2a2a2a" stroke="#2a2a2a" stroke-width="0.1">60</text>
<text x="356.72" y="118.4" font-size="6.7" fill="#2a2a2a" stroke="#2a2a2a" stroke-width="0.1">70</text>
<text x="401.28" y="118.4" font-size="6.7" fill="#2a2a2a" stroke="#2a2a2a" stroke-width="0.1">80</text>
<text x="445.84" y="118.4" font-size="6.7" fill="#2a2a2a" stroke="#2a2a2a" stroke-width="0.1">90</text>
<path d="M39 131.50H44" stroke="#a2a2a2" stroke-width="1"/>
<path d="M39 136.50H44" stroke="#a2a2a2" stroke-width="1"/>
<path d="M39 140.50H44" stroke="#a2a2a2" stroke-width="1"/>
<path d="M39 145.50H44" stroke="#a2a2a2" stroke-width="1"/>
<path d="M28 149.50H44" stroke="#a0a0a0" stroke-width="1"/>
<path d="M39 154.50H44" stroke="#a2a2a2" stroke-width="1"/>
<path d="M39 158.50H44" stroke="#a2a2a2" stroke-width="1"/>
<path d="M39 163.50H44" stroke="#a2a2a2" stroke-width="1"/>
<path d="M39 167.50H44" stroke="#a2a2a2" stroke-width="1"/>
<path d="M28 172.50H44" stroke="#d4d4d4" stroke-width="0.8"/>
<path d="M39 176.50H44" stroke="#a2a2a2" stroke-width="1"/>
<path d="M39 180.50H44" stroke="#a2a2a2" stroke-width="1"/>
<path d="M39 185.50H44" stroke="#a2a2a2" stroke-width="1"/>
<path d="M39 189.50H44" stroke="#a2a2a2" stroke-width="1"/>
<path d="M28 194.50H44" stroke="#a0a0a0" stroke-width="1"/>
<path d="M39 198.50H44" stroke="#a2a2a2" stroke-width="1"/>
<path d="M39 203.50H44" stroke="#a2a2a2" stroke-width="1"/>
<path d="M39 207.50H44" stroke="#a2a2a2" stroke-width="1"/>
<path d="M39 212.50H44" stroke="#a2a2a2" stroke-width="1"/>
<path d="M28 216.50H44" stroke="#d4d4d4" stroke-width="0.8"/>
<path d="M39 221.50H44" stroke="#a2a2a2" stroke-width="1"/>
<path d="M39 225.50H44" stroke="#a2a2a2" stroke-width="1"/>
<path d="M39 229.50H44" stroke="#a2a2a2" stroke-width="1"/>
<path d="M39 234.50H44" stroke="#a2a2a2" stroke-width="1"/>
<path d="M28 238.50H44" stroke="#a0a0a0" stroke-width="1"/>
<path d="M39 243.50H44" stroke="#a2a2a2" stroke-width="1"/>
<path d="M39 247.50H44" stroke="#a2a2a2" stroke-width="1"/>
<path d="M39 252.50H44" stroke="#a2a2a2" stroke-width="1"/>
<path d="M39 256.50H44" stroke="#a2a2a2" stroke-width="1"/>
<path d="M28 261.50H44" stroke="#d4d4d4" stroke-width="0.8"/>
<path d="M39 265.50H44" stroke="#a2a2a2" stroke-width="1"/>
<path d="M39 270.50H44" stroke="#a2a2a2" stroke-width="1"/>
<path d="M39 274.50H44" stroke="#a2a2a2" stroke-width="1"/>
<path d="M39 279.50H44" stroke="#a2a2a2" stroke-width="1"/>
<path d="M28 283.50H44" stroke="#a0a0a0" stroke-width="1"/>
<path d="M39 287.50H44" stroke="#a2a2a2" stroke-width="1"/>
<path d="M39 292.50H44" stroke="#a2a2a2" stroke-width="1"/>
<path d="M39 296.50H44" stroke="#a2a2a2" stroke-width="1"/>
<path d="M39 301.50H44" stroke="#a2a2a2" stroke-width="1"/>
<path d="M28 305.50H44" stroke="#d4d4d4" stroke-width="0.8"/>
<path d="M39 310.50H44" stroke="#a2a2a2" stroke-width="1"/>
<path d="M39 314.50H44" stroke="#a2a2a2" stroke-width="1"/>
<path d="M39 319.50H44" stroke="#a2a2a2" stroke-width="1"/>
<path d="M39 323.50H44" stroke="#a2a2a2" stroke-width="1"/>
<path d="M28 328.50H44" stroke="#a0a0a0" stroke-width="1"/>
<path d="M39 332.50H44" stroke="#a2a2a2" stroke-width="1"/>
<path d="M39 336.50H44" stroke="#a2a2a2" stroke-width="1"/>
<path d="M39 341.50H44" stroke="#a2a2a2" stroke-width="1"/>
<path d="M39 345.50H44" stroke="#a2a2a2" stroke-width="1"/>
<path d="M28 350.50H44" stroke="#d4d4d4" stroke-width="0.8"/>
<path d="M39 354.50H44" stroke="#a2a2a2" stroke-width="1"/>
<path d="M39 359.50H44" stroke="#a2a2a2" stroke-width="1"/>
<path d="M39 363.50H44" stroke="#a2a2a2" stroke-width="1"/>
<path d="M39 368.50H44" stroke="#a2a2a2" stroke-width="1"/>
<path d="M28 372.50H44" stroke="#a0a0a0" stroke-width="1"/>
<path d="M39 377.50H44" stroke="#a2a2a2" stroke-width="1"/>
<path d="M39 381.50H44" stroke="#a2a2a2" stroke-width="1"/>
<path d="M39 385.50H44" stroke="#a2a2a2" stroke-width="1"/>
<path d="M39 390.50H44" stroke="#a2a2a2" stroke-width="1"/>
<path d="M28 394.50H44" stroke="#d4d4d4" stroke-width="0.8"/>
<path d="M39 399.50H44" stroke="#a2a2a2" stroke-width="1"/>
<text x="29.3" y="133.80" font-size="6.7" fill="#2a2a2a" stroke="#2a2a2a" stroke-width="0.1">0</text>
<text x="29.3" y="178.36" font-size="6.7" fill="#2a2a2a" stroke="#2a2a2a" stroke-width="0.1">10</text>
<text x="29.3" y="222.92" font-size="6.7" fill="#2a2a2a" stroke="#2a2a2a" stroke-width="0.1">20</text>
<text x="29.3" y="267.48" font-size="6.7" fill="#2a2a2a" stroke="#2a2a2a" stroke-width="0.1">30</text>
<text x="29.3" y="312.04" font-size="6.7" fill="#2a2a2a" stroke="#2a2a2a" stroke-width="0.1">40</text>
<text x="29.3" y="356.60" font-size="6.7" fill="#2a2a2a" stroke="#2a2a2a" stroke-width="0.1">50</text>
<text x="29.3" y="401.16" font-size="6.7" fill="#2a2a2a" stroke="#2a2a2a" stroke-width="0.1">60</text>
<path d="M44 127.6H400" stroke="#3a3a3a" stroke-width="1.1"/>
<path d="M44.3 127V393.5" stroke="#3a3a3a" stroke-width="1.1"/>
</svg>

<!-- canvas -->
<div class="a" style="left:44.5px;top:128px;width:355px;height:265.5px;background:#fff"></div>
<div class="a" style="left:399px;top:128px;width:1px;height:265.5px;background:#555"></div>
<div class="a" style="left:400px;top:128px;width:45px;height:265.5px;background:#e4e4e4"></div>
<!-- v scroll -->
<div class="a" style="left:445px;top:128px;width:11px;height:265.5px;background:#e2e2e2;border-left:1px solid #c8c8c8"></div>
<div class="a" style="left:446px;top:128px;width:8px;height:131px;background:#fff"></div>
<div class="a" style="left:446px;top:128px;width:9.5px;height:9.5px;background:#fff;border:1px solid #dcdcdc"></div>
<svg style="left:448.5px;top:131px" width="5" height="3"><path d="M0.3 2.7L2.5 0.5L4.7 2.7" stroke="#666" stroke-width="0.8" fill="none"/></svg>
<div class="a" style="left:446px;top:384px;width:9.5px;height:9.5px;background:#fff;border:1px solid #dcdcdc"></div>
<svg style="left:448.5px;top:387.5px" width="5" height="3"><path d="M0.3 0.3L2.5 2.5L4.7 0.3" stroke="#666" stroke-width="0.8" fill="none"/></svg>
<!-- h scroll -->
<div class="a" style="left:44.5px;top:393.5px;width:411px;height:1px;background:#cfcfcf"></div>
<div class="a" style="left:44.5px;top:394.5px;width:401.5px;height:10px;background:#dedede"></div>
<div class="a" style="left:45px;top:394.5px;width:8.5px;height:9.5px;background:#f5f5f5;border:1px solid #dcdcdc"></div>
<svg style="left:47.5px;top:397px" width="3" height="5"><path d="M2.7 0.3L0.5 2.5L2.7 4.7" stroke="#666" stroke-width="0.8" fill="none"/></svg>
<div class="a" style="left:53.5px;top:394.5px;width:189.5px;height:8.5px;background:#fff;border:1px solid #e2e2e2"></div>
<div class="a" style="left:436px;top:394px;width:9.5px;height:9.5px;background:#fff;border:1px solid #dcdcdc"></div>
<svg style="left:439.5px;top:396.5px" width="3" height="5"><path d="M0.3 0.3L2.5 2.5L0.3 4.7" stroke="#666" stroke-width="0.8" fill="none"/></svg>
<div class="a" style="left:446px;top:393.5px;width:9.5px;height:10.5px;background:#ececec"></div>
<div class="a" style="left:455.5px;top:98.5px;width:1px;height:306px;background:#d0d0d0"></div>
<div class="a" style="left:28px;top:404px;width:428px;height:1px;background:#d0d0d0"></div>

<!-- right panels -->
<div class="a" style="left:460.5px;top:98.5px;width:137.5px;height:149.5px;background:#fff;border:1px solid #c9c9c9;border-top:none"></div>
<div class="a" style="left:460.5px;top:98.5px;width:137.5px;height:12.5px;background:#e8e8e8;border-bottom:1px solid #cfcfcf"></div>
<svg style="left:463px;top:103px" width="8" height="7"><path d="M0.5 0.5H7.5V6.5H0.5Z" fill="#f3c56e"/><path d="M1 2.3H7M1 4.5H7" stroke="#fbe3b0" stroke-width="0.7"/></svg>
<div class="a" style="left:474.5px;top:102px;font-size:7px;color:#222;line-height:9px;-webkit-text-stroke:0.15px #222">数据源(D)</div>
<svg style="left:579px;top:104px" width="5" height="3"><path d="M0 0H5L2.5 2.8Z" fill="#222"/></svg>
<svg style="left:589px;top:103px" width="6" height="6"><path d="M0.5 0.5L5.5 5.5M5.5 0.5L0.5 5.5" stroke="#222" stroke-width="1.1"/></svg>

<div class="a" style="left:460.5px;top:254.5px;width:137.5px;height:148px;background:#fff;border:1px solid #c9c9c9;border-top:none"></div>
<div class="a" style="left:460.5px;top:254.5px;width:137.5px;height:13px;background:#e8e8e8;border-bottom:1px solid #cfcfcf"></div>
<svg style="left:461.5px;top:256.5px" width="12" height="9"><path d="M1.2 5.5L6.5 1.2C7.2 0.6 8 0.6 8.6 1L10.8 2.6C11.4 3.1 11.3 3.9 10.7 4.4L5.5 8.3C5 8.7 4.2 8.7 3.6 8.3L1.3 6.8C0.8 6.5 0.7 5.9 1.2 5.5Z" fill="#2f6cb0"/><path d="M2 5.8L4.5 7.4L10.2 3.2" stroke="#9cc4ec" stroke-width="0.8" fill="none"/></svg>
<div class="a" style="left:474.5px;top:257px;font-size:7px;color:#222;line-height:9px;-webkit-text-stroke:0.15px #222">对象(B)</div>
<svg style="left:579px;top:260px" width="5" height="3"><path d="M0 0H5L2.5 2.8Z" fill="#222"/></svg>
<svg style="left:589px;top:259px" width="6" height="6"><path d="M0.5 0.5L5.5 5.5M5.5 0.5L0.5 5.5" stroke="#222" stroke-width="1.1"/></svg>
<!-- palette -->
<div class="a" style="left:28px;top:405px;width:572px;height:14px;background:#f0f0f0"></div>
<svg style="left:29px;top:407px" width="11.5" height="11">
 <path d="M0.5 0.5H10.5V10.5H0.5Z" fill="#e8ecf0" stroke="#8a96a2" stroke-width="1"/>
 <path d="M1.5 1.5H9.5V4H1.5Z" fill="#3a5a7e"/>
 <path d="M2.5 6.5H8.5V10H2.5Z" fill="#fff" stroke="#8a96a2" stroke-width="0.6"/>
 <path d="M3.5 7.5H5V9.5H3.5Z M6 7.5H7.5V9.5H6Z" fill="#6a7a8a"/>
</svg>
<div class="a" style="left:42.5px;top:407px;width:10.5px;height:11px;background:#f0dcdc;border:1px solid #b8a8a8"></div>
<svg style="left:44.5px;top:409.5px" width="7" height="7"><path d="M0.5 0.5L6.5 6.5M6.5 0.5L0.5 6.5" stroke="#c04848" stroke-width="1.5"/></svg>
<div class="a" style="left:53.5px;top:407px;width:9px;height:11px;background:#f2f2f2;border:1px solid #b8b8b8"></div>
<svg style="left:56px;top:410px" width="4" height="5"><path d="M3.5 0L0 2.5L3.5 5Z" fill="#222"/></svg>
<svg style="left:0;top:0" width="600" height="433"><rect x="65.00" y="407.7" width="8.57" height="8.8" fill="#000000"/><rect x="74.37" y="407.7" width="8.57" height="8.8" fill="#0000ff"/><rect x="83.75" y="407.7" width="8.57" height="8.8" fill="#00ffff"/><rect x="93.12" y="407.7" width="8.57" height="8.8" fill="#00ff00"/><rect x="102.49" y="407.7" width="8.57" height="8.8" fill="#ff0000"/><rect x="111.87" y="407.7" width="8.57" height="8.8" fill="#ff00ff"/><rect x="121.24" y="407.7" width="8.57" height="8.8" fill="#ffff00"/><rect x="131.11" y="408.2" width="7.57" height="8" fill="#fff" stroke="#c8c8c8" stroke-width="0.8"/><rect x="139.99" y="407.7" width="8.57" height="8.8" fill="#333333"/><rect x="149.36" y="407.7" width="8.57" height="8.8" fill="#666666"/><rect x="158.73" y="407.7" width="8.57" height="8.8" fill="#777777"/><rect x="168.11" y="407.7" width="8.57" height="8.8" fill="#8f8f8f"/><rect x="177.48" y="407.7" width="8.57" height="8.8" fill="#b2b2b2"/><rect x="186.85" y="407.7" width="8.57" height="8.8" fill="#cbcbcb"/><rect x="196.22" y="407.7" width="8.57" height="8.8" fill="#e0e0e0"/><rect x="205.60" y="407.7" width="8.57" height="8.8" fill="#80ffff"/><rect x="214.97" y="407.7" width="8.57" height="8.8" fill="#0080c0"/><rect x="224.34" y="407.7" width="8.57" height="8.8" fill="#0080ff"/><rect x="233.72" y="407.7" width="8.57" height="8.8" fill="#0000a0"/><rect x="243.09" y="407.7" width="8.57" height="8.8" fill="#000040"/><rect x="252.46" y="407.7" width="8.57" height="8.8" fill="#000080"/><rect x="261.84" y="407.7" width="8.57" height="8.8" fill="#004080"/><rect x="271.21" y="407.7" width="8.57" height="8.8" fill="#8080c0"/><rect x="280.58" y="407.7" width="8.57" height="8.8" fill="#8080ff"/><rect x="289.96" y="407.7" width="8.57" height="8.8" fill="#8000ff"/><rect x="299.33" y="407.7" width="8.57" height="8.8" fill="#400080"/><rect x="308.70" y="407.7" width="8.57" height="8.8" fill="#800080"/><rect x="318.08" y="407.7" width="8.57" height="8.8" fill="#ff80ff"/><rect x="327.45" y="407.7" width="8.57" height="8.8" fill="#ff80c0"/><rect x="336.82" y="407.7" width="8.57" height="8.8" fill="#ff8080"/><rect x="346.20" y="407.7" width="8.57" height="8.8" fill="#ff8040"/><rect x="355.57" y="407.7" width="8.57" height="8.8" fill="#ff8000"/><rect x="364.94" y="407.7" width="8.57" height="8.8" fill="#ff0080"/><rect x="374.32" y="407.7" width="8.57" height="8.8" fill="#400000"/><rect x="383.69" y="407.7" width="8.57" height="8.8" fill="#804000"/><rect x="393.06" y="407.7" width="8.57" height="8.8" fill="#800040"/><rect x="402.44" y="407.7" width="8.57" height="8.8" fill="#804040"/><rect x="411.81" y="407.7" width="8.57" height="8.8" fill="#800000"/><rect x="421.18" y="407.7" width="8.57" height="8.8" fill="#400040"/><rect x="430.56" y="407.7" width="8.57" height="8.8" fill="#300040"/><rect x="439.93" y="407.7" width="8.57" height="8.8" fill="#808000"/><rect x="449.30" y="407.7" width="8.57" height="8.8" fill="#808040"/><rect x="458.67" y="407.7" width="8.57" height="8.8" fill="#ffff80"/><rect x="468.05" y="407.7" width="8.57" height="8.8" fill="#80ff80"/><rect x="477.42" y="407.7" width="8.57" height="8.8" fill="#00ff40"/><rect x="486.79" y="407.7" width="8.57" height="8.8" fill="#00ff80"/><rect x="496.17" y="407.7" width="8.57" height="8.8" fill="#80ff00"/><rect x="505.54" y="407.7" width="8.57" height="8.8" fill="#008040"/><rect x="514.91" y="407.7" width="8.57" height="8.8" fill="#008000"/><rect x="524.29" y="407.7" width="8.57" height="8.8" fill="#004000"/><rect x="533.66" y="407.7" width="8.57" height="8.8" fill="#004040"/><rect x="543.03" y="407.7" width="8.57" height="8.8" fill="#408080"/><rect x="552.41" y="407.7" width="8.57" height="8.8" fill="#008080"/><rect x="562.28" y="408.2" width="7.57" height="8" fill="#fff" stroke="#c8c8c8" stroke-width="0.8"/><rect x="571.65" y="408.2" width="7.57" height="8" fill="#fff" stroke="#c8c8c8" stroke-width="0.8"/><rect x="581.03" y="408.2" width="7.57" height="8" fill="#fff" stroke="#c8c8c8" stroke-width="0.8"/></svg>
<div class="a" style="left:590px;top:407px;width:8.5px;height:10.5px;background:#f5f5f5;border:1px solid #c8c8c8"></div>
<svg style="left:592.5px;top:410px" width="4" height="5"><path d="M0.5 0L4 2.5L0.5 5Z" fill="#222"/></svg>

<!-- status bar -->
<div class="a" style="left:28px;top:419px;width:572px;height:12.5px;background:#f0f0f0"></div>
<div class="a" style="left:0;top:431.5px;width:600px;height:1.5px;background:#7a8a80"></div>
<div class="a" style="left:598px;top:36.5px;width:1px;height:396px;background:#c4c4c4"></div><div class="a" style="left:599px;top:36.5px;width:1px;height:396px;background:#f0f0f0"></div>
<div class="a" style="left:29.7px;top:421.5px;font-size:8px;color:#333;line-height:9px;transform-origin:0 0;transform:scaleX(0.866)">Microsoft Print to PDF</div>
<div class="a" style="left:134px;top:420px;width:1px;height:11px;background:#a8a8a8"></div>
<div class="a" style="left:137.5px;top:421.5px;font-size:8px;color:#333;line-height:9px;transform-origin:0 0;transform:scaleX(0.79)">PORTPROMPT:</div>
<div class="a" style="left:213px;top:420px;width:1px;height:11px;background:#a8a8a8"></div>
<div class="a" style="left:216.5px;top:421.5px;font-size:8px;color:#333;line-height:9px;transform-origin:0 0;transform:scaleX(0.82)">x: y: 55.13; 14.08</div>
<div class="a" style="left:292px;top:420px;width:1px;height:11px;background:#a8a8a8"></div>
<div class="a" style="left:295.5px;top:421.5px;font-size:8px;color:#333;line-height:9px;transform-origin:0 0;transform:scaleX(0.79)">cx: cy:</div>
<div class="a" style="left:371px;top:420px;width:1px;height:11px;background:#a8a8a8"></div>
<div class="a" style="left:477.5px;top:420px;width:1px;height:11px;background:#a8a8a8"></div>
<div class="a" style="left:479.5px;top:419px;width:57px;height:12px;background:#fbf27c"></div>
<div class="a" style="left:484px;top:421px;font-size:7px;color:#d07a10;line-height:9px">30剩余天数</div>
<div class="a" style="left:537px;top:418.5px;font-size:12px;font-weight:bold;color:#3a3a1a;line-height:14px;letter-spacing:-0.5px">爪神下载网</div>

<!-- panel items -->
<div class="a" style="left:488.5px;top:113.5px;font-size:6.7px;color:#333;line-height:11.6px;white-space:nowrap;-webkit-text-stroke:0.05px #333">数据库(D)(0)<br>日期(A)(0)<br>公式(F)(0)<br>表单(O)(0)<br>表查找(T)(0)<br>计数器(T)(0)<br>自由变量(R)(0)</div>
<svg style="left:475px;top:113px" width="12" height="82">
 <path d="M1 2.5C1 0 9 0 9 2.5V7C9 9.5 1 9.5 1 7Z" fill="#e8b24e"/>
 <path d="M1 3.5C1 5 9 5 9 3.5M1 6C1 7.5 9 7.5 9 6" stroke="#f6d58c" stroke-width="0.6" fill="none"/>
 <path d="M1.5 13H9.5V21H1.5Z" fill="#fff" stroke="#8a8a8a" stroke-width="0.7"/>
 <path d="M1.5 12.7H9.5V14.5H1.5Z" fill="#3a5a8a"/>
 <circle cx="7" cy="18.5" r="2.3" fill="#fff" stroke="#777" stroke-width="0.6"/>
 <text x="1" y="32" font-family="Liberation Serif" font-style="italic" font-size="10" fill="#222" stroke="#222" stroke-width="0.3">fx</text>
 <path d="M1 36H10V44.5H1Z" fill="#f4f0f8" stroke="#9a8aa8" stroke-width="0.7"/>
 <path d="M1 36H10V37.8H1Z" fill="#5a4a8a"/>
 <path d="M2.5 40H8.5M2.5 42.5H8.5" stroke="#aaa" stroke-width="0.6"/>
 <path d="M1 47.5H9.5V56H1Z" fill="#fff" stroke="#7a8a9a" stroke-width="0.7"/>
 <path d="M1 47.5H9.5V49.2H1Z" fill="#2f4f7a"/>
 <circle cx="5" cy="52.5" r="2" fill="none" stroke="#2f4f7a" stroke-width="0.9"/>
 <path d="M6.5 54L9 56.5" stroke="#2f4f7a" stroke-width="1"/>
 <path d="M1 59H10V67H1Z" fill="#fff" stroke="#8a8a8a" stroke-width="0.7"/>
 <text x="1.8" y="65.5" font-family="Liberation Sans" font-size="5.5" fill="#333" stroke="#333" stroke-width="0.2">00</text>
 <circle cx="3.2" cy="76.3" r="2.2" fill="none" stroke="#444" stroke-width="1.4" stroke-dasharray="1 0.5"/>
 <circle cx="7.8" cy="73.3" r="1.7" fill="none" stroke="#444" stroke-width="1.2"/>
 <circle cx="3.5" cy="71.8" r="1.1" fill="none" stroke="#555" stroke-width="0.9"/>
</svg>
<div class="a" style="left:488.5px;top:268.5px;font-size:6.7px;color:#333;line-height:11.7px;white-space:nowrap;-webkit-text-stroke:0.05px #333">文本(T)(0)<br>条形码(B)(0)<br>图像(I)(0)<br>线条(L)(0)<br>矩形(R)(0)<br>圆形/椭圆 (C)(0)<br>多边形(P)(0)<br>扩展的对象(0)</div>
<svg style="left:475px;top:269px" width="12" height="92">
 <text x="0.3" y="9" font-family="Liberation Serif" font-size="12.5" fill="#222" stroke="#222" stroke-width="0.35">T</text>
 <path d="M1.5 13V20.5M3.5 13V20.5M5 13V20.5M7 13V20.5M8.5 13V20.5" stroke="#444" stroke-width="1"/>
 <path d="M1.5 23H10V32H1.5Z" fill="#dbe8f4" stroke="#9ab6d2" stroke-width="0.6"/>
 <path d="M2 31.5L4.5 27.5L6.5 29.5L8 27.5L9.5 31.5Z" fill="#2a6cb0"/>
 <path d="M1.5 43.5L9.5 35.5" stroke="#222" stroke-width="1.2"/>
 <path d="M1.5 47.8H9.5V55H1.5Z" fill="none" stroke="#333" stroke-width="1.1"/>
 <ellipse cx="5.5" cy="63" rx="4.2" ry="3.3" fill="none" stroke="#333" stroke-width="1.1"/>
 <path d="M1.5 78.5V74L4.5 71H6.5V74H9.5V78.5Z" fill="none" stroke="#333" stroke-width="1.1"/>
 <path d="M2 84.5H8V90H2Z" fill="#cfe5f5" stroke="#1d3f66" stroke-width="1.5"/>
 <path d="M1 82.5H10M10 82.5V90" stroke="#1d3f66" stroke-width="0.6" stroke-dasharray="0.8 0.8"/>
</svg>
</body></html>
